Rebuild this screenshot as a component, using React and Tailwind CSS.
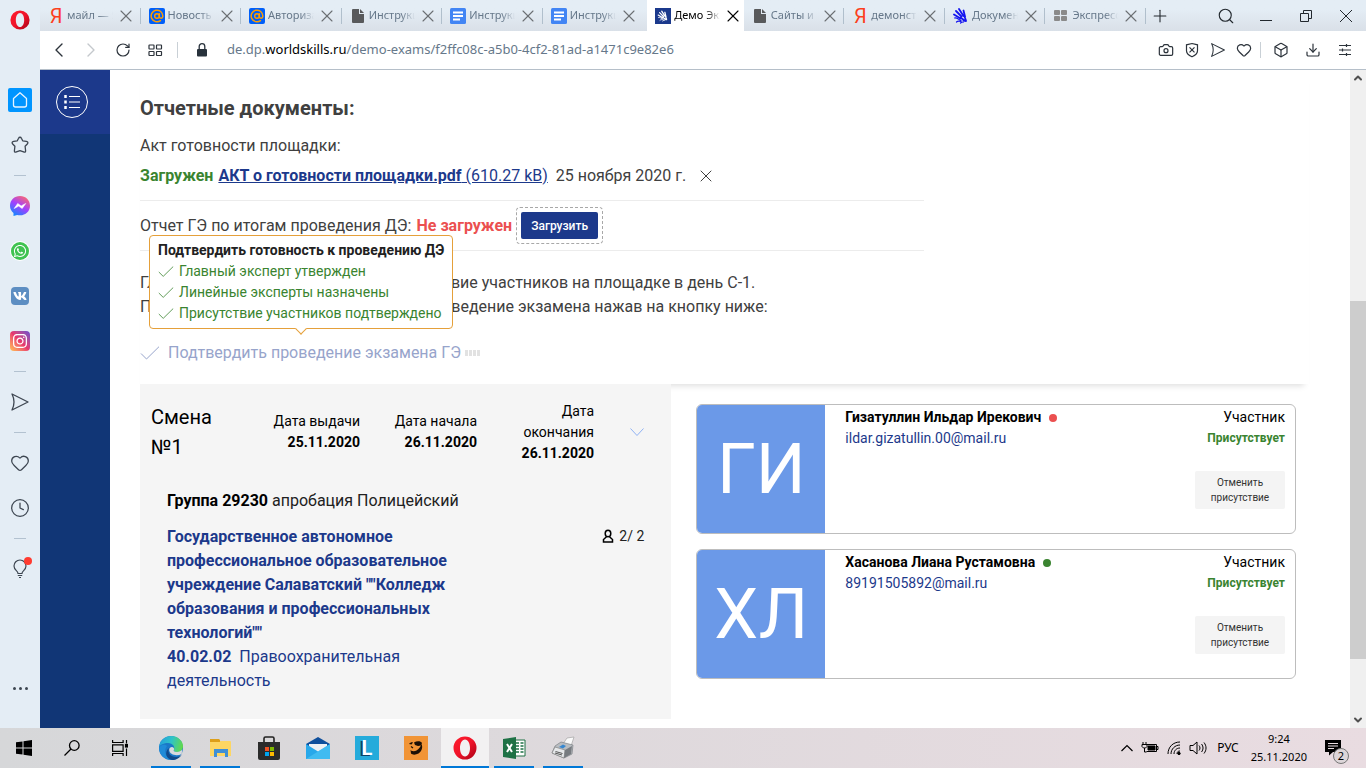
import React from "react";
import clsx from "clsx";
import {
  AtSign,
  Box,
  Camera,
  ChevronDown,
  ChevronLeft,
  ChevronRight,
  ChevronUp,
  Clock4,
  Download,
  Heart,
  Plus,
  RotateCw,
  Search,
  X,
} from "lucide-react";
import { FaInstagram, FaVk, FaWhatsapp } from "react-icons/fa";

const YandexIcon = () => (
  <span className="w-4 text-center text-xl leading-4 text-[#fc3f1d] font-['Roboto',sans-serif]">Я</span>
);

const MailIcon = () => (
  <span className="flex size-4 items-center justify-center rounded-xs bg-[#005ff9]">
    <AtSign className="size-3.5 text-[#ff9e00]" strokeWidth={2.5} />
  </span>
);

const FileIcon = () => (
  <svg viewBox="0 0 16 16" className="size-4 fill-[#58595b]">
    <path d="M3 1h6v5h5v8a1 1 0 0 1-1 1H3a1 1 0 0 1-1-1V2a1 1 0 0 1 1-1z" />
    <path d="M10 1l4 4h-4z" />
  </svg>
);

const DocsIcon = () => (
  <svg viewBox="0 0 16 16" className="size-4">
    <rect width="16" height="16" rx="1.5" fill="#4285f4" />
    <path d="M3 4.500h10M3 8h10M3 11.500h7" stroke="#fff" strokeWidth="1.800" />
  </svg>
);

const HandShape = () => (
  <g fill="none" strokeLinecap="round">
    <path d="M3 3l5.500 5.500M6 1l4.500 7M10.500 2.500l1.500 6M1 6.500l6.500 4" strokeWidth="1.800" />
    <path d="M1.500 10c2.500-.5 4 1.500 6.500 2.500M3.500 14c1.500-1.500 3-1 4.500-.5M7.500 15c1-1 2-1 3-1" strokeWidth="1.200" />
    <path d="M7.500 9.500l4 3M11.500 8.500l1.500 4M10.500 12.500l2.500.5" strokeWidth="1.800" />
  </g>
);

const SkillsIcon = () => (
  <svg viewBox="0 0 16 16" className="size-4">
    <rect width="16" height="16" fill="#1b398c" />
    <g stroke="#fff" transform="translate(2.5 2.5) scale(.7)">
      <HandShape />
    </g>
  </svg>
);

const HandIcon = () => (
  <svg viewBox="0 0 16 16" className="size-4" stroke="#1414f0">
    <HandShape />
  </svg>
);

const DialIcon = () => (
  <svg viewBox="0 0 16 16" className="size-4 fill-[#8a8a8a]">
    <rect x="1" y="2" width="6" height="5" rx="1" />
    <rect x="8" y="2" width="6" height="5" rx="1" />
    <rect x="1" y="8" width="6" height="5" rx="1" />
    <rect x="8" y="8" width="6" height="5" rx="1" />
  </svg>
);

const OperaIcon = ({ className }) => (
  <svg viewBox="0 0 24 24" className={className}>
    <defs>
      <linearGradient id="opera" x1="0" y1="0" x2="1" y2="1">
        <stop offset="0" stopColor="#ff1b2d" />
        <stop offset="0.5" stopColor="#f0142a" />
        <stop offset="1" stopColor="#a70014" />
      </linearGradient>
    </defs>
    <path
      fill="url(#opera)"
      fillRule="evenodd"
      d="M12 0.500a11.500 11.500 0 1 1 0 23a11.500 11.500 0 1 1 0-23zM12 3.500c-3 0-5 3.800-5 8.500s2 8.500 5 8.500s5-3.800 5-8.500s-2-8.500-5-8.500z"
    />
  </svg>
);

const SendIcon = ({ className }) => (
  <svg viewBox="0 0 20 20" className={className} fill="none" stroke="currentColor" strokeWidth="1.300" strokeLinejoin="round">
    <path d="M2 2l16 8-16 8c2.500-5 2.500-11 0-16z" />
  </svg>
);

const HomeIcon = () => (
  <svg viewBox="0 0 24 24" className="size-6">
    <rect width="24" height="24" rx="2" fill="#0095ff" />
    <path d="M5.500 10.500L12 4.800l6.500 5.700v6.500a2 2 0 0 1-2 2h-9a2 2 0 0 1-2-2z" fill="none" stroke="#e6f4ff" strokeWidth="1.300" strokeLinejoin="round" />
  </svg>
);

const StarIcon = () => (
  <svg viewBox="0 0 20 20" className="size-5 text-[#3d4651]" fill="none" stroke="currentColor" strokeWidth="1.300" strokeLinejoin="round">
    <path d="M8.600 3.200c.6-1.300 2.200-1.300 2.800 0l1.300 2.600 3.600.5c1.600.3 2.100 1.600 1 2.700l-2.200 2.300.5 4.500c.1 1.300-.8 1.700-2 1.100L10 15.700l-3.600 1.200c-1.200.6-2.100.2-2-1.100l.5-4.500L2.700 9c-1.100-1.100-.6-2.400 1-2.700l3.600-.5z" />
  </svg>
);

const MessengerIcon = () => (
  <svg viewBox="0 0 20 20" className="size-5">
    <defs>
      <linearGradient id="messenger" x1="0.2" y1="1" x2="0.8" y2="0">
        <stop offset="0" stopColor="#0a8cff" />
        <stop offset="0.5" stopColor="#a240ff" />
        <stop offset="1" stopColor="#ff6a6a" />
      </linearGradient>
    </defs>
    <path d="M10 0c5.700 0 10 4.200 10 9.700s-4.300 9.600-10 9.600c-1 0-2-.1-2.900-.4L3.500 20v-3.100C1.300 15.200 0 12.700 0 9.700 0 4.200 4.300 0 10 0z" fill="url(#messenger)" />
    <path d="M4.200 12.500l3.500-5 3.500 2.400 4.500-2.400-3.500 5-3.500-2.400z" fill="#fff" stroke="#fff" strokeWidth=".6" />
  </svg>
);

const BulbIcon = () => (
  <span className="relative">
    <svg viewBox="0 0 20 20" className="size-5 text-[#3d4651]" fill="none" stroke="currentColor" strokeWidth="1.200">
      <path d="M8 14.500C8 12 4 11 4 7a6 6 0 0 1 12 0c0 4-4 5-4 7.500zM7.800 16.500h4.400M9 18.500h2" />
    </svg>
    <span className="absolute -top-0.5 -right-0.5 size-2 rounded-full bg-[#ff3b30]" />
  </span>
);

const SideSeparator = () => (
  <div className="flex h-4 items-center">
    <span className="h-px w-3 bg-[#b3c2d0]" />
  </div>
);

const SideButton = ({ label, children }) => (
  <button aria-label={label} className="flex h-[45px] w-10 items-center justify-center text-[#3d4651]">
    {children}
  </button>
);

const BrowserSidebar = () => (
  <aside className="flex w-10 shrink-0 flex-col items-center bg-[#e4edf5]">
    <button aria-label="Opera" className="mb-[37px] flex h-10 items-center">
      <OperaIcon className="size-5" />
    </button>
    <SideButton label="Домой"><HomeIcon /></SideButton>
    <SideButton label="Избранное"><StarIcon /></SideButton>
    <SideSeparator />
    <SideButton label="Messenger"><MessengerIcon /></SideButton>
    <SideButton label="WhatsApp">
      <span className="flex size-[18px] items-center justify-center rounded-full bg-[#40c351] ring-1 ring-white">
        <FaWhatsapp className="size-3.5 text-white" />
      </span>
    </SideButton>
    <SideButton label="VK">
      <span className="flex size-[18px] items-center justify-center rounded-sm bg-[#5d8ec2]">
        <FaVk className="size-3.5 text-white" />
      </span>
    </SideButton>
    <SideButton label="Instagram">
      <span className="flex size-5 items-center justify-center rounded-sm bg-linear-to-tr from-[#ffc04d] via-[#e8356d] to-[#6a47cf]">
        <FaInstagram className="size-4 text-white" />
      </span>
    </SideButton>
    <SideSeparator />
    <SideButton label="Отправить"><SendIcon className="size-5" /></SideButton>
    <SideSeparator />
    <SideButton label="Закладки"><Heart className="size-5" strokeWidth={1.5} /></SideButton>
    <SideButton label="История"><Clock4 className="size-5" strokeWidth={1.5} /></SideButton>
    <SideSeparator />
    <SideButton label="Подсказки"><BulbIcon /></SideButton>
    <button aria-label="Ещё" className="mt-auto mb-9 flex h-2 items-center gap-[3px]">
      <span className="size-[3px] rounded-full bg-[#3d4651]" />
      <span className="size-[3px] rounded-full bg-[#3d4651]" />
      <span className="size-[3px] rounded-full bg-[#3d4651]" />
    </button>
  </aside>
);

const tabs = [
  { title: "майл — Яндекс", icon: YandexIcon },
  { title: "Новость", icon: MailIcon },
  { title: "Авториза", icon: MailIcon },
  { title: "Инструкц", icon: FileIcon },
  { title: "Инструкц", icon: DocsIcon },
  { title: "Инструкц", icon: DocsIcon, last: true },
  { title: "Демо Экз", icon: SkillsIcon, active: true },
  { title: "Сайты и", icon: FileIcon },
  { title: "демонстр", icon: YandexIcon },
  { title: "Докумен", icon: HandIcon },
  { title: "Экспресс", icon: DialIcon },
];

const Tab = ({ title, icon: Icon, active, last }) => (
  <div
    className={clsx(
      "relative flex min-w-0 items-center pl-2",
      active && "ml-1 bg-white pl-1 text-black",
      !active && "text-[#66788a]"
    )}
  >
    <Icon />
    <span className="ml-[3px] w-[46px] overflow-hidden whitespace-nowrap mask-r-from-70% mask-r-to-100%">{title}</span>
    <button aria-label="Закрыть вкладку" className="ml-[3px]">
      <X className={clsx("size-5", active ? "text-black" : "text-[#6b6f73]")} strokeWidth={1.3} />
    </button>
    {!active && !last && <span className="absolute right-0 h-4 w-px bg-[#b0bfcc]" />}
  </div>
);

const TabBar = () => (
  <div className="flex h-[31px] bg-linear-to-b from-[#e4edf5] from-30% to-[#d9e0e8]">
    <div className="grid w-[1106px] shrink-0 grid-cols-11 text-[11px] font-['Noto_Sans',sans-serif]">
      {tabs.map((tab, i) => (
        <Tab key={i} {...tab} />
      ))}
    </div>
    <button aria-label="Новая вкладка" className="px-1">
      <Plus className="size-5 text-[#22282e]" strokeWidth={1.3} />
    </button>
    <div className="ml-auto flex text-[#22282e]">
      <button aria-label="Поиск" className="flex w-10 items-center justify-center">
        <Search className="size-[18px]" strokeWidth={1.5} />
      </button>
      <button aria-label="Свернуть" className="flex w-10 items-center justify-center">
        <svg viewBox="0 0 12 12" className="size-3" stroke="currentColor"><path d="M0 10.500h12" /></svg>
      </button>
      <button aria-label="Развернуть" className="flex w-10 items-center justify-center">
        <svg viewBox="0 0 12 12" className="size-3" fill="none" stroke="currentColor">
          <path d="M.5 3.500h8v8h-8zM3.500 3.500v-3h8v8h-3" />
        </svg>
      </button>
      <button aria-label="Закрыть" className="flex w-10 items-center justify-center">
        <svg viewBox="0 0 12 12" className="size-3" stroke="currentColor"><path d="M0 0l12 12M12 0L0 12" /></svg>
      </button>
    </div>
  </div>
);

const AddressBar = () => (
  <div className="flex h-[39px] items-center border-b border-[#b5bfc9] bg-white text-[#2c333b]">
    <button aria-label="Назад" className="ml-[7px] w-6"><ChevronLeft className="size-6" strokeWidth={1.4} /></button>
    <button aria-label="Вперёд" className="ml-2 w-6 text-[#c4c8cc]"><ChevronRight className="size-6" strokeWidth={1.4} /></button>
    <button aria-label="Обновить" className="ml-3"><RotateCw className="size-4" strokeWidth={1.8} /></button>
    <button aria-label="Экспресс-панель" className="ml-4">
      <svg viewBox="0 0 16 16" className="size-4" fill="none" stroke="currentColor" strokeWidth="1.200">
        <rect x="2" y="3" width="5" height="4" rx=".5" />
        <rect x="9.500" y="3" width="5" height="4" rx=".5" />
        <rect x="2" y="9.500" width="5" height="4" rx=".5" />
        <rect x="9.500" y="9.500" width="5" height="4" rx=".5" />
      </svg>
    </button>
    <span className="ml-3.5 h-4 w-px bg-[#c9d0d6]" />
    <svg viewBox="0 0 12 14" className="mr-[19px] ml-[18px] h-3.5 w-3">
      <rect x="1" y="6" width="10" height="7.500" rx="1" fill="#28323c" />
      <path d="M3.200 6V3.500a2.800 2.800 0 0 1 5.600 0V6" fill="none" stroke="#28323c" strokeWidth="1.300" />
    </svg>
    <div
      role="textbox"
      aria-label="Адрес"
      contentEditable
      suppressContentEditableWarning
      className="flex-1 text-[13px] text-[#66788a] outline-none font-['Noto_Sans',sans-serif]"
    >
      de.dp.<span className="text-black">worldskills.ru</span>/demo-exams/f2ffc08c-a5b0-4cf2-81ad-a1471c9e82e6
    </div>
    <div className="flex items-center gap-2.5">
      <button aria-label="Снимок"><Camera className="size-4" strokeWidth={1.8} /></button>
      <button aria-label="Блокировка рекламы">
        <svg viewBox="0 0 16 16" className="size-4" fill="none" stroke="currentColor" strokeWidth="1.200">
          <path d="M8 1.500l5.500 1.300v6c0 3-2.500 4.700-5.500 6-3-1.300-5.500-3-5.500-6v-6zM5.500 5.300l5 5M10.500 5.300l-5 5" />
        </svg>
      </button>
      <button aria-label="Отправить"><SendIcon className="size-4" /></button>
      <button aria-label="В закладки"><Heart className="size-4" strokeWidth={1.8} /></button>
    </div>
    <span className="mr-3 ml-2 h-4 w-px bg-[#c9d0d6]" />
    <div className="mr-[13px] flex items-center gap-4">
      <button aria-label="Кошелёк"><Box className="size-4" strokeWidth={1.8} /></button>
      <button aria-label="Загрузки">
        <Download className="size-4" strokeWidth={1.8} />
      </button>
      <button aria-label="Настройки">
        <svg viewBox="0 0 16 16" className="size-4" stroke="currentColor" strokeWidth="1.200">
          <path d="M2 3.500h12M2 8h12M2 12.500h12M9.500 2v3M5.500 6.500v3M9.500 11v3" />
        </svg>
      </button>
    </div>
  </div>
);

const SiteNav = () => (
  <nav className="w-[70px] shrink-0 bg-[#113676]">
    <div className="flex h-16 items-center bg-[#1c398b] pl-4">
      <button aria-label="Меню" className="flex size-8 items-center justify-center rounded-full border border-white">
        <svg viewBox="0 0 16 16" className="size-4" stroke="#fff">
          <path d="M5 2.500h11M5 8h11M5 13.500h11" />
          <path d="M1.500 1v3M1.500 6.500v3M1.500 12v3" strokeWidth="2.500" />
        </svg>
      </button>
    </div>
  </nav>
);

const Check = ({ className }) => (
  <svg viewBox="0 0 20 14" className={className} fill="none" stroke="currentColor">
    <path d="M1 7.500l5.500 5.500L19 .7" />
  </svg>
);

const checks = ["Главный эксперт утвержден", "Линейные эксперты назначены", "Присутствие участников подтверждено"];

const ReadinessTooltip = () => (
  <div
    role="tooltip"
    className="absolute bottom-full left-[9px] mb-3 rounded-sm border border-[#e5a03a] bg-white px-2 py-1 text-sm leading-[21px] whitespace-nowrap"
  >
    <p className="font-bold text-[#212121]">Подтвердить готовность к проведению ДЭ</p>
    <ul className="text-[#3a8430]">
      {checks.map((text) => (
        <li key={text} className="flex items-center">
          <Check className="mr-[5px] w-4" />
          {text}
        </li>
      ))}
    </ul>
    <span className="absolute -bottom-[5px] left-1/2 size-2 -translate-x-1/2 rotate-45 border-r border-b border-[#e5a03a] bg-white" />
  </div>
);

const Documents = () => (
  <section className="pt-[23px] pb-[19px] shadow-[0_7px_6px_-5px_rgba(0,0,0,0.13)]">
    <h2 className="text-xl leading-[30px] font-bold">Отчетные документы:</h2>
    <p className="mt-[11px]">Акт готовности площадки:</p>
    <div className="max-w-[784px]">
      <div className="mt-1.5 flex items-center border-b border-[#ececec] pb-3">
        <b className="mr-[5px] text-[#3a8430]">Загружен</b>
        <a href="#act" className="mr-2 text-[#1c398b] underline">
          <b>АКТ о готовности площадки.pdf</b> (610.27 kB)
        </a>
        25 ноября 2020 г.
        <button aria-label="Удалить файл" className="ml-2.5"><X className="size-5" strokeWidth={1.2} /></button>
      </div>
      <div className="flex items-center border-b border-[#ececec] py-1.5">
        Отчет ГЭ по итогам проведения ДЭ:
        <b className="mr-1 ml-[5px] text-[#eb5050]">Не загружен</b>
        <span className="rounded-sm border border-dashed border-[#a8a8a8] p-1">
          <button className="block h-[27px] rounded-xs bg-[#1c398b] px-2.5 text-xs font-medium text-white">Загрузить</button>
        </span>
      </div>
    </div>
    <p className="mt-5">Главный эксперт подтверждает присутствие участников на площадке в день С-1.</p>
    <p>После чего необходимо подтвердить проведение экзамена нажав на кнопку ниже:</p>
    <div className="relative mt-[22px] flex items-center">
      <button disabled className="flex items-center text-[#97a4cb]">
        <Check className="mr-2 w-5" />
        Подтвердить проведение экзамена ГЭ
      </button>
      <span className="ml-1 flex gap-px">
        {[0, 1, 2, 3].map((i) => (
          <span key={i} className="h-1.5 w-[3px] bg-[#e2e2e2]" />
        ))}
      </span>
      <ReadinessTooltip />
    </div>
  </section>
);

const dates = [
  { label: "Дата выдачи", value: "25.11.2020" },
  { label: "Дата начала", value: "26.11.2020" },
  { label: "Дата окончания", value: "26.11.2020" },
];

const ShiftPanel = () => (
  <section className="relative w-5/11 bg-[#f5f5f5] pb-[26px] text-black">
    <div className="grid h-24 grid-cols-[92px_117px_117px_117px_1fr] items-center pl-[11px] text-sm leading-[21px]">
      <h3 className="w-16 text-xl leading-[30px]">Смена №1</h3>
      {dates.map((d) => (
        <div key={d.label} className="pl-5 text-right">
          {d.label}
          <b className="block font-bold">{d.value}</b>
        </div>
      ))}
      <button aria-label="Свернуть смену" className="pl-9">
        <svg viewBox="0 0 14 8" className="w-3.5" fill="none" stroke="#8fb1f3"><path d="M.5 .5L7 7.500l6.500-7" /></svg>
      </button>
    </div>
    <p className="mt-[9px] px-[27px] text-[#212121]"><b className="text-black">Группа 29230</b> апробация Полицейский</p>
    <div className="mt-3 flex justify-between px-[27px] text-[#1c398b]">
      <a href="#org" className="w-[290px]">
        <b>Государственное автономное профессиональное образовательное учреждение Салаватский ""Колледж образования и профессиональных технологий""</b>
        <span className="block"><b className="mr-1">40.02.02</b> Правоохранительная деятельность</span>
      </a>
      <span className="flex h-[22px] items-center text-sm text-[#212121]">
        <svg viewBox="0 0 12 14" className="mr-[5px] h-3.5 w-3" fill="none" stroke="#000" strokeWidth="1.500">
          <ellipse cx="6" cy="4.500" rx="2.800" ry="3.300" />
          <path d="M4.500 7.800L1.500 10.500v2.500h9v-2.500L7.500 7.800" />
        </svg>
        2/ 2
      </span>
    </div>
  </section>
);

const people = [
  { initials: "ГИ", name: "Гизатуллин Ильдар Ирекович", mail: "ildar.gizatullin.00@mail.ru", online: false },
  { initials: "ХЛ", name: "Хасанова Лиана Рустамовна", mail: "89191505892@mail.ru", online: true },
];

const PersonCard = ({ initials, name, mail, online }) => (
  <article className="flex h-[130px] overflow-hidden rounded-md border border-[#bdbdbd] text-sm leading-[21px] text-black">
    <div className="flex w-32 shrink-0 items-center justify-center bg-[#6b99e8] text-[70px] text-white">{initials}</div>
    <div className="flex-1 pt-0.5 pl-5">
      <p className="flex items-center font-bold">
        {name}
        <span className={clsx("ml-2 size-2 rounded-full", online ? "bg-[#3a8430]" : "bg-[#eb5050]")} />
      </p>
      <a href={`mailto:${mail}`} className="text-[#1c398b]">{mail}</a>
    </div>
    <div className="flex flex-col items-end pt-0.5 pr-2.5">
      <span>Участник</span>
      <b className="text-xs leading-[21px] text-[#3a8430]">Присутствует</b>
      <button className="mt-[22px] w-[90px] rounded-xs bg-[#f4f4f4] py-1 text-[10px] leading-[15px] text-[#333]">
        Отменить присутствие
      </button>
    </div>
  </article>
);

const Scrollbar = () => (
  <div className="flex w-4 shrink-0 flex-col items-center justify-between bg-[#f0f0f0] text-[#505050]">
    <ChevronUp className="my-0.5 size-3" strokeWidth={4} />
    <span className="mt-auto mb-[53px] h-[358px] w-full bg-[#cdcdcd]" />
    <ChevronDown className="my-0.5 size-3" strokeWidth={4} />
  </div>
);

const TaskButton = ({ label, open, active, children }) => (
  <button
    aria-label={label}
    className={clsx("relative mr-px flex w-12 items-center justify-center", active && "bg-[#f2f1f2]")}
  >
    {children}
    {(open || active) && (
      <span className={clsx("absolute bottom-0 h-0.5 bg-[#0078d7]", active ? "w-full" : "w-10")} />
    )}
  </button>
);

const Taskbar = () => (
  <footer className="flex h-10 shrink-0 justify-between bg-linear-to-r from-[#d6d7d9] to-[#e9dce1] text-black font-['Noto_Sans',sans-serif]">
    <div className="flex">
      <button aria-label="Пуск" className="flex w-12 items-center justify-center">
        <svg viewBox="0 0 16 16" className="size-4"><path d="M0 2.300l6.500-.9v6.100H0zM7.500 1.200L16 0v7.500H7.500zM0 8.500h6.500v6.100L0 13.700zM7.500 8.500H16V16l-8.500-1.200z" /></svg>
      </button>
      <button aria-label="Поиск" className="flex w-12 items-center justify-center">
        <svg viewBox="0 0 16 16" className="size-4" fill="none" stroke="#000" strokeWidth="1.300">
          <circle cx="10.300" cy="5.500" r="4.800" /><path d="M7 9l-6.500 6.500" />
        </svg>
      </button>
      <button aria-label="Представление задач" className="mr-[3px] flex w-12 items-center justify-center">
        <svg viewBox="0 0 16 16" className="size-4" fill="none" stroke="#000" strokeWidth="1.200">
          <path d="M.6 0v2.500h10.500V0M.6 16v-2.500h10.500V16M.6 4.800h10.500v6.500H.6zM14.500 0v3.500M14.500 8.500V16" />
          <rect x="13.500" y="4.500" width="2" height="2.500" fill="#000" />
        </svg>
      </button>
      <TaskButton label="Edge" open>
        <svg viewBox="0 0 24 24" className="size-6">
          <defs>
            <linearGradient id="edgeTop" x1="0" y1="0.3" x2="1" y2="0.5">
              <stop offset="0" stopColor="#249fdc" />
              <stop offset="0.5" stopColor="#2fc3c7" />
              <stop offset="1" stopColor="#62d94b" />
            </linearGradient>
          </defs>
          <circle cx="12" cy="12" r="12" fill="#1a78c8" />
          <path d="M0 11C1 4 6 0 12 0c7 0 12 5 12 10 0 4-3 6-6 6s-4-1-3-2.500C16 11 14 7 9 7 5 7 1 9 0 11z" fill="url(#edgeTop)" />
          <path d="M8 10c-4 5-1 12 5 14C6 24 0 19 0 12c2-4 6-4 8-2z" fill="#1f8bd8" />
          <path d="M10 12c-2 5 2 9 7 9 3 0 5-1 6-3-2 4-6 6-10 6-6-1-8-8-3-12z" fill="#114a8b" />
          <path d="M15 13.500c-1 1.500 0 2.500 3 2.500 2 0 4-1 5.300-2.500L22.700 18c-5 2.500-12 1-12.500-4 0-2 1.300-3 2.800-3 1.200 0 2.500 1 2 2.500z" fill="#d9dadc" />
        </svg>
      </TaskButton>
      <TaskButton label="Проводник" open>
        <svg viewBox="0 0 24 24" className="size-6">
          <path d="M2 4a1 1 0 0 1 1-1h7l2 2h10a1 1 0 0 1 1 1v14H2z" fill="#fdd663" />
          <path d="M2 3h9l1 1v2H2z" fill="#dd9f19" />
          <path d="M6 21v-8h14v8h-3v-4h-8v4z" fill="#3f8fd6" />
        </svg>
      </TaskButton>
      <TaskButton label="Магазин">
        <svg viewBox="0 0 24 24" className="size-6">
          <path d="M7 6V2.500A1.500 1.500 0 0 1 8.500 1h7A1.500 1.500 0 0 1 17 2.500V6" fill="none" stroke="#222" strokeWidth="1.600" />
          <path d="M1 6h22v16a2 2 0 0 1-2 2H3a2 2 0 0 1-2-2z" fill="#2b2b2b" />
          <path d="M8 11h4v4H8z" fill="#f25022" /><path d="M13 11h4v4h-4z" fill="#7fba00" />
          <path d="M8 16h4v4H8z" fill="#00a4ef" /><path d="M13 16h4v4h-4z" fill="#ffb900" />
        </svg>
      </TaskButton>
      <TaskButton label="Почта">
        <svg viewBox="0 0 24 24" className="size-6">
          <path d="M0 8l12-7 12 7v4H0z" fill="#0f4f9c" />
          <path d="M3 8h18v5l-9 5-9-5z" fill="#eef1f4" />
          <path d="M0 8l12 7.500L24 8v15H0z" fill="#28a8ea" />
          <path d="M0 23L24 8v15z" fill="#50c8f5" opacity=".6" />
        </svg>
      </TaskButton>
      <TaskButton label="L">
        <span className="flex size-6 items-center justify-center bg-[#25abdb] text-xl leading-6 font-bold text-white [text-shadow:-2px_1px_0_#0b4468] font-['Roboto',sans-serif]">L</span>
      </TaskButton>
      <TaskButton label="Телефония">
        <svg viewBox="0 0 24 24" className="size-6">
          <rect width="24" height="24" fill="#f19436" />
          <path d="M5 8c1-1.500 3-2 4-1.500l-1.500 2zM10 6.500c3-2 7-1.500 8 .5l-1 2.500-3 .5-3-1z" fill="#1c1006" />
          <path d="M17.500 8c1.500 3 .5 7-3 9.500-3 1.500-6 1.500-7.500 0l-.5-3.500c1.500 1.500 4 1.500 6 .5 2.500-1.500 4-3.500 5-6.500z" fill="#1c1006" />
          <path d="M7 10.500l2 1.500M12.500 7.500l2 .8" stroke="#1c1006" strokeWidth="1.200" />
        </svg>
      </TaskButton>
      <TaskButton label="Opera" active><OperaIcon className="size-6" /></TaskButton>
      <TaskButton label="Excel" open>
        <svg viewBox="0 0 24 24" className="size-6">
          <path d="M12 4h11v16H12z" fill="#fff" stroke="#1e7145" />
          <path d="M14 7h3M18.500 7h3M14 10h3M18.500 10h3M14 13h3M18.500 13h3M14 16h3M18.500 16h3" stroke="#1e7145" strokeWidth="1.600" />
          <path d="M1 3l13-2v22L1 21z" fill="#1e7145" />
          <path d="M5 8l5 8M10 8l-5 8" stroke="#fff" strokeWidth="2" />
        </svg>
      </TaskButton>
      <TaskButton label="Факс" open>
        <svg viewBox="0 0 24 24" className="size-6">
          <path d="M12 8l4-6 7-1-3 9z" fill="#fafafa" stroke="#999" strokeWidth=".6" />
          <path d="M4 10l6-4 12 3-1 9-8 4L1 17z" fill="#b9bdc1" stroke="#6f7479" strokeWidth=".6" />
          <path d="M1 17l3-6 10 3-1 8z" fill="#e6e8ea" stroke="#777" strokeWidth=".6" />
          <path d="M14 14l7-4-1 8-7 4z" fill="#777b80" />
          <path d="M8 11l4-2.500 3 1.500-3 2.500z" fill="#3787cf" />
          <path d="M4.500 15.500l7 2M4 17l7 2" stroke="#555" />
        </svg>
      </TaskButton>
    </div>
    <div className="flex items-center">
      <svg viewBox="0 0 12 8" className="mr-2 w-3" fill="none" stroke="#000" strokeWidth="1.200">
        <path d="M.5 7L6 1.500 11.500 7" />
      </svg>
      <svg viewBox="0 0 18 12" className="mr-2 h-3 w-[18px]" fill="none" stroke="#000">
        <path d="M5.500 2.500h10v7h-10M15.500 4.500h1.500v3h-1.500M2 0v2.500M5 0v2.500M1 2.500h5v2l-1.500 1.500h-2L1 4.500zM3.500 6v4h2" />
        <path d="M7 4h7v4H7z" fill="#000" />
      </svg>
      <svg viewBox="0 0 14 14" className="mr-2 size-3.5" fill="none" stroke="#000">
        <path d="M1 13C1 6 6 1 13 1M4 13c0-5 4-9 9-9M7 13c0-3.500 2.500-6 6-6M10 13c0-2 1-3 3-3" />
        <circle cx="12" cy="12.500" r="1.200" fill="#000" />
      </svg>
      <svg viewBox="0 0 18 14" className="h-3.5 w-[18px]" fill="none" stroke="#000">
        <path d="M1 4.500h3l4-3.500v12l-4-3.500H1zM10 4.500c1.300 1.500 1.300 3.500 0 5M12.500 3c2 2.500 2 5.500 0 8M15 1.500c2.700 3.500 2.700 7.500 0 11" />
      </svg>
      <span className="ml-2.5 text-xs">РУС</span>
      <time className="ml-3 text-center text-[11px] leading-[18px]">
        9:24
        <br />
        25.11.2020
      </time>
      <button aria-label="Уведомления" className="relative mr-[25px] ml-[18px]">
        <svg viewBox="0 0 16 16" className="size-4">
          <path d="M0 0h16v12H8l-4 3.500V12H0z" />
          <path d="M3 3.500h10M3 6h10M3 8.500h6" stroke="#e8dde1" />
        </svg>
        <span className="absolute -right-2 -bottom-2 flex size-4 items-center justify-center rounded-full border border-[#777] bg-[#ddd6d9] text-[11px] leading-3">2</span>
      </button>
    </div>
  </footer>
);

const App = () => {
  return (
    <div className="flex h-screen flex-col overflow-hidden bg-white">
      <div className="flex min-h-0 flex-1">
        <BrowserSidebar />
        <div className="flex min-w-0 flex-1 flex-col">
          <TabBar />
          <AddressBar />
          <div className="flex min-h-0 flex-1 font-['Roboto',sans-serif]">
            <SiteNav />
            <main className="min-w-0 flex-1 overflow-hidden pr-[41px] pl-[30px] text-base text-[#404040]">
              <Documents />
              <div className="flex">
                <ShiftPanel />
                <div className="flex flex-1 flex-col gap-[15px] pt-5 pr-[13px] pl-[25px]">
                  {people.map((person) => (
                    <PersonCard key={person.mail} {...person} />
                  ))}
                </div>
              </div>
            </main>
            <Scrollbar />
          </div>
        </div>
      </div>
      <Taskbar />
    </div>
  );
};

export default App;
